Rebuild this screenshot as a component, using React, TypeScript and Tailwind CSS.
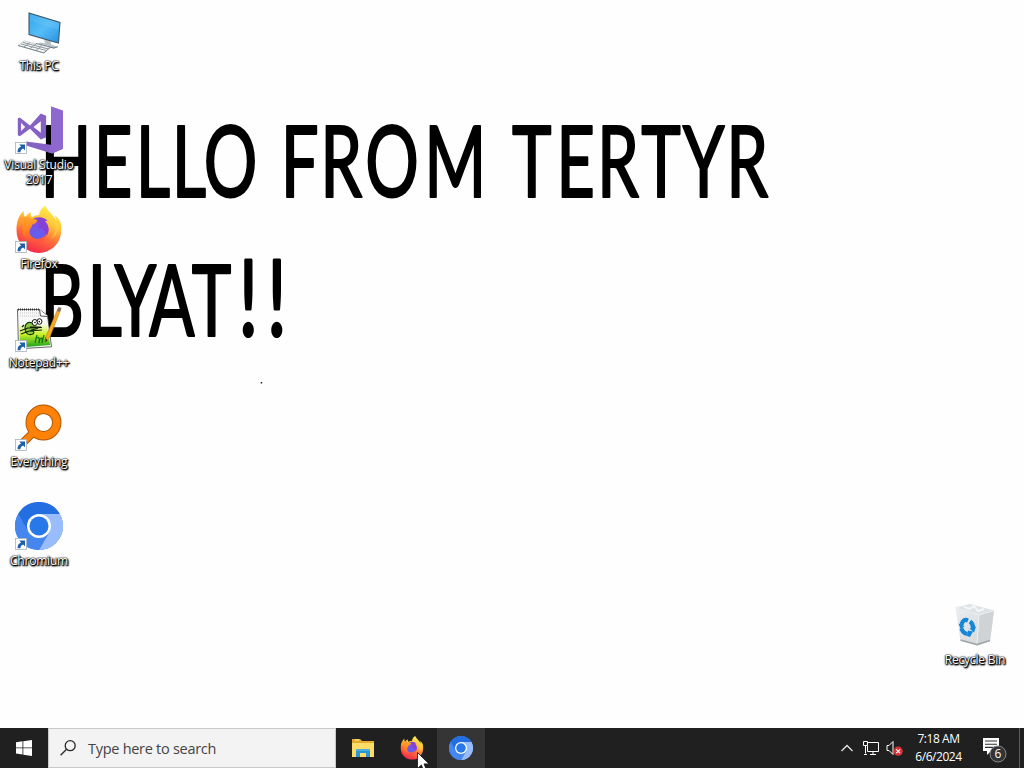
import type { ReactNode } from "react";

const ink = "#000000";

function Wallpaper() {
  return (
    <svg className="absolute inset-0 h-full w-full" viewBox="0 0 1024 728" preserveAspectRatio="none">
      <g
        fill={ink}
        stroke={ink}
        strokeWidth="2.2"
        strokeLinejoin="round"
        fontFamily="Lato, 'Open Sans', sans-serif"
        fontSize="98.5"
      >
        <g transform="scale(0.68 1)">
          <text y="197.2" x="59.5 138 199.5 252.5 299.5">HELLO</text>
          <text y="197.2" x="413 471 537 624">FROM</text>
          <text y="197.2" x="753 818 878 943 1004 1068">TERTYR</text>
          <text y="336.2" x="59.5 128.5 168.5 219.5 282">BLYAT<tspan fontSize="105" strokeWidth="3.2" x="351 393">!!</tspan></text>
        </g>
      </g>
      <rect x="260.7" y="382" width="1.5" height="1.5" fill="#222" />
    </svg>
  );
}

function Shortcut() {
  return (
    <g>
      <rect x="0.5" y="36.5" width="11" height="11" fill="#fff" stroke="#a9b2ba" strokeWidth="0.8" />
      <path d="M4.2 38.5H10v5.8l-1.9-1.9c-2 1-2.6 2-2.7 3.9H2.6c-.2-3.2 1-4.9 3.5-5.9z" fill="#1f5fa8" />
    </g>
  );
}

function PcIcon() {
  return (
    <svg className="h-12 w-12" viewBox="0 1.5 48 48">
      <defs>
        <linearGradient id="screen" x1="0" y1="0" x2="1" y2="1">
          <stop offset="0" stopColor="#30a4ec" />
          <stop offset=".5" stopColor="#56bdf8" />
          <stop offset="1" stopColor="#268fe0" />
        </linearGradient>
      </defs>
      <path d="M29 33l7 3v3l6 2-3 2-17-4 3-2 5 1z" fill="#b9c2c6" />
      <path d="M21 38l18 4.6 4-1.4" fill="none" stroke="#66757c" strokeWidth="1" />
      <path d="M14 7.5l31 9.5-1.5 20.5L14 29z" fill="url(#screen)" stroke="#3d5967" strokeWidth="1.1" />
      <path d="M15 8.8l28.8 9-.4 7L15 15z" fill="#7acbfa" opacity=".25" />
      <path d="M9 35.5l26 6.5-6 5.5L3 40z" fill="#f8f9f9" stroke="#b4bcc0" strokeWidth=".7" />
      <path d="M8 37l25 6.4M6 38.5l25 6.4M15 37l-6 4.5M21 38.5L15 43M27 40l-6 5" fill="none" stroke="#8e999f" strokeWidth="1" />
      <path d="M3 40l26 7.4 6-5.4" fill="none" stroke="#77848a" strokeWidth="1" />
    </svg>
  );
}

function VisualStudioIcon() {
  return (
    <svg className="h-12 w-12 overflow-visible" viewBox="0 0 48 48">
      <g transform="translate(0 -1.5)">
        <path
          fillRule="evenodd"
          d="M2.8 13.8l2-.9 10.2 8L25.8 9l5.3 2.2v21.5L25.8 35 15 24.2l-10.2 7.6-2-1zM6 18.3v8.3l4.2-4.1zm12.5 4.2l7.3 5.8V16.8z"
          fill="#8661c5"
        />
        <path d="M36 2l12 4.3v38L37 49l-26-8v-4l25 3.2z" fill="#8661c5" />
        <path d="M36 2l12 4.3v38L37 49l-4-1.4 3-7.4z" fill="#8f68cf" />
      </g>
      <Shortcut />
    </svg>
  );
}

function FirefoxArt() {
  return (
    <g>
      <defs>
        <linearGradient id="flame" x1=".75" y1="0" x2=".35" y2="1">
          <stop offset="0" stopColor="#fff34b" />
          <stop offset=".35" stopColor="#ffc23a" />
          <stop offset=".63" stopColor="#ff7139" />
          <stop offset="1" stopColor="#f5254c" />
        </linearGradient>
        <linearGradient id="fox" x1="0" y1="0" x2="0" y2="1">
          <stop offset="0" stopColor="#ffa52e" />
          <stop offset=".5" stopColor="#ff851d" />
          <stop offset="1" stopColor="#ff484a" />
        </linearGradient>
        <radialGradient id="globe" cx=".4" cy=".75" r=".8">
          <stop offset="0" stopColor="#5a62ee" />
          <stop offset=".5" stopColor="#7754e8" />
          <stop offset="1" stopColor="#a739cb" />
        </radialGradient>
      </defs>
      <path
        d="M45.5 16.5c-1.3-3-3.5-5.5-6-7 1 2 1.8 4.1 2 6-3-7-8.2-9-11.2-15.5-4.5 2.6-5.8 6.4-6.2 9.3-2.7.1-5 .8-7 2-1.7-1-1.5-4-1.5-4.8-2 .9-4 2.9-5.4 4.8-1.6-1.2-1.6-5-1.4-6.2C3.3 9.4 1.5 16.7 1.5 24.5a22.4 22.4 0 0 0 44.8.5c0-3 0-5.8-.8-8.5z"
        fill="url(#flame)"
      />
      <circle cx="23.5" cy="24" r="10" fill="url(#globe)" />
      <path d="M17.5 13.8c4-3.6 12-3 15.3 1.7-1-.3-2-.3-2.8 0 5 4.3 4 11.6 1.2 15-.3-5-3.8-8.5-8-8.5 1.5-2.7 1.7-5-.2-6.8z" fill="#8341d8" />
      <path
        d="M2.6 16c1.2-3.1 4-5.3 6.5-4.9 3-.8 6 .4 7.5 2 2.2 0 4.7.2 5.6.8.4 2-2 4-4.9 5-.7.4-.5 2-.5 2-2.5 2-3.1 5.6-1.6 8.4 2 3.4 6 4.7 10.5 3.1 3.1-1 5.3-3.2 6.8-4.8-1.6 7.2-8.3 11.1-15 9.6C8.5 35.2 5.8 26 8.3 18c-2-.1-4 2-5.7 5z"
        fill="url(#fox)"
      />
      <path d="M36.5 10.5c6 7 4.5 18-1.5 23 8.4-3 10.5-12.5 6.5-19z" fill="#ffdc3e" opacity=".45" />
    </g>
  );
}

function FirefoxIcon() {
  return (
    <svg className="h-12 w-12 overflow-visible" viewBox="0 0 48 48">
      <g transform="translate(0 .8)"><FirefoxArt /></g>
      <Shortcut />
    </svg>
  );
}

function NotepadIcon() {
  return (
    <svg className="h-12 w-12" viewBox="0 0 48 48">
      <defs>
        <linearGradient id="grass" x1="0" y1="0" x2="0" y2="1">
          <stop offset="0" stopColor="#f8fbe2" />
          <stop offset=".45" stopColor="#c8f028" />
          <stop offset="1" stopColor="#159d1c" />
        </linearGradient>
      </defs>
      <path d="M2.5 5.5h22l8 6 4 31.3-33 2z" fill="#f8f9f8" stroke="#424242" strokeWidth=".8" />
      <path d="M4 21l28-1 3.2 21L5 43.5z" fill="url(#grass)" />
      <path d="M3 5.5h22" stroke="#333" strokeWidth="2" strokeDasharray="1 1" />
      <path d="M5 9h19M5 12h20" stroke="#aaa" strokeDasharray="1 1" strokeWidth=".7" />
      <path d="M24.5 5.5l1 6.5 7 .5" fill="#fff" stroke="#555" />
      <path d="M17 19c-4-2-7 1-7 5 0 5 3 8 8 6 2-2 0-4-2-3 0-2 4-1 7-3" fill="#89c943" stroke="#193a0c" strokeWidth="1.2" />
      <path d="M5 27l8-3 14-.5M6 30l8-3 13-1M9 21l-2 2M15 23h11" fill="none" stroke="#151f0d" strokeWidth="1.2" />
      <ellipse cx="19.8" cy="18.5" rx="2.7" ry="3" fill="#fff" stroke="#111" />
      <ellipse cx="24.5" cy="17.5" rx="2.4" ry="2.8" fill="#fff" stroke="#111" />
      <circle cx="20" cy="18.5" r=".8" />
      <circle cx="24.3" cy="17.6" r=".8" />
      <path d="M20 39l2-8M22 34c3-2 2 2 2 5l1-4c3-3 2 1 2 4l2-8m2 2l-1 5" fill="none" stroke="#087310" strokeWidth="1.1" />
      <path d="M43 4.5l2.7 1-11 28-4 4.3.6-6.2z" fill="#f3ae21" stroke="#c87918" strokeWidth=".6" />
      <path d="M43.5 3l3 1-1.6 4-3-1z" fill="#84736a" />
      <path d="M30.8 35l-.2 3 2-2z" fill="#222" />
      <Shortcut />
    </svg>
  );
}

function EverythingIcon() {
  return (
    <svg className="h-12 w-12" viewBox="0 0 48 48">
      <path d="M18.5 29.5L5.5 42" stroke="#ad5800" strokeWidth="8" />
      <circle cx="28.5" cy="19.5" r="13.3" fill="none" stroke="#ad5800" strokeWidth="9.4" />
      <circle cx="28.5" cy="19.5" r="13.3" fill="none" stroke="#ff8208" strokeWidth="7.4" />
      <path d="M19.5 28.5L5.5 42" stroke="#ff8208" strokeWidth="6" />
      <Shortcut />
    </svg>
  );
}

function ChromiumArt() {
  return (
    <g>
      <circle cx="24" cy="24" r="24" fill="#4587ef" />
      <path d="M24 12h20.8A24 24 0 0 1 24 48l10.4-18z" fill="#98bdfa" />
      <path d="M3.2 12A24 24 0 0 1 44.8 12H24L13.6 30z" fill="#236fe2" />
      <path d="M3.2 12A24 24 0 0 0 24 48l10.4-18H13.6z" fill="#4587ef" />
      <circle cx="24" cy="24" r="12" fill="#fff" />
      <circle cx="24" cy="24" r="9.5" fill="#2878e9" />
    </g>
  );
}

function ChromiumIcon() {
  return (
    <svg className="h-12 w-12" viewBox="0 0 48 48">
      <ChromiumArt />
      <Shortcut />
    </svg>
  );
}

function RecycleIcon() {
  return (
    <svg className="h-12 w-12" viewBox="0 0 48 48">
      <defs>
        <linearGradient id="bin" x1="0" y1="0" x2="1" y2="1">
          <stop offset="0" stopColor="#eceff1" />
          <stop offset="1" stopColor="#d0d4d6" />
        </linearGradient>
      </defs>
      <path d="M4.5 6L19 3l24 6.5L39 40l-13 4.5L9.5 40z" fill="url(#bin)" />
      <path d="M28 14l15-4.5L39 40l-13 4.5z" fill="#cfd3d5" />
      <path d="M5 6l23 8 15-4.5M28 14l-2 30" fill="none" stroke="#eef1f2" />
      <path d="M7 7l12-4 22 6.5-13 3.5z" fill="#dfe2e4" />
      <path d="M13 6l6 2 4-3 4 5 6-2" stroke="#f5f6f7" fill="none" strokeWidth="2" />
      <path d="M9.5 39L26 43.5l13-4" fill="none" stroke="#a1a8ac" strokeWidth="1.8" />
      <g fill="none" stroke="#1686d7" strokeWidth="4.2">
        <path d="M10.5 24c.5-4 3-6 6.5-4.5" />
        <path d="M19 20.5c2.5 1.7 3.2 4.5 3 7" />
        <path d="M10.5 27.5c1 3.5 3 5 6 5.5" />
      </g>
      <path d="M7.5 22.5l6 2.5-3.5 4zM25 25.5l-2 6-4.5-4zM17 29.5l5 1-3 5.5-3-1z" fill="#1686d7" />
    </svg>
  );
}

function DesktopItem({ icon, lines }: { icon: ReactNode; lines: string[] }) {
  return (
    <div className="flex h-[99px] w-[78px] flex-col items-center">
      {icon}
      <div className="mt-[3px] flex flex-col items-center text-[12px] leading-[15px] tracking-[-0.2px] text-white [text-shadow:0_0_1px_#000,1px_1px_1px_#000,0_1px_2px_#000,1px_1px_2px_#000,0_0_2px_#000]">
        {lines.map((line) => (
          <span key={line} className="whitespace-nowrap">{line}</span>
        ))}
      </div>
    </div>
  );
}

function Taskbar() {
  return (
    <footer className="flex h-10 shrink-0 bg-[#202020] text-white">
      <button className="flex h-10 w-12 items-center justify-center" aria-label="Start">
        <svg className="h-4 w-4" viewBox="0 0 16 16">
          <path d="M0 2.2l6.5-.9v6.2H0zM7.3 1.2L16 0v7.5H7.3zM0 8.3h6.5v6.2L0 13.6zM7.3 8.3H16V16l-8.7-1.3z" fill="#fff" />
        </svg>
      </button>
      <div className="flex h-10 w-72 items-center border border-[#c8c8c8] bg-[#f3f3f3] pl-[11px] text-[#444]">
        <svg className="h-4 w-4" viewBox="0 0 16 16" fill="none" stroke="#292929" strokeWidth="1.3">
          <circle cx="10.2" cy="5.7" r="5" />
          <path d="M6.6 9.2L.6 15.3" />
        </svg>
        <span className="ml-3 whitespace-nowrap pt-[2px] text-[14.5px] leading-5 tracking-[-0.28px]">Type here to search</span>
      </div>
      <div className="flex items-center pl-[3px]">
        <div className="flex h-10 w-12 items-center justify-center">
          <svg className="h-6 w-6" viewBox="0 0 24 24">
            <path d="M1 3h8l2 2h12v16H1z" fill="#e6ad2d" />
            <path d="M1 7h22v14H1z" fill="#ffdb68" />
            <path d="M4 4h4" stroke="#fff3b5" />
            <path d="M5 21v-7q0-1 1-1h12q1 0 1 1v7h-4v-4H9v4z" fill="#2b98d3" />
            <path d="M5 14h14" stroke="#68c6ee" />
          </svg>
        </div>
        <div className="flex h-10 w-[50px] items-center justify-center">
          <svg className="h-6 w-6" viewBox="0 0 48 48"><FirefoxArt /></svg>
        </div>
        <div className="flex h-10 w-12 items-center justify-center bg-[#353535]">
          <svg className="h-6 w-6" viewBox="0 0 48 48"><ChromiumArt /></svg>
        </div>
      </div>
      <div className="ml-auto flex items-center">
        <svg className="h-4 w-4" viewBox="0 0 16 16" fill="none" stroke="#e5e5e5" strokeWidth="1.3">
          <path d="M2.5 11L8 5.5l5.5 5.5" />
        </svg>
        <svg className="ml-2 h-4 w-4" viewBox="0 0 16 16" fill="none" stroke="#fff" strokeWidth="1">
          <path d="M5 2.5h10.5v9H4.5V6M7 14.5h6M10 11.5v3" />
          <path d="M.5 1.5h4v4h-4zM2.5 5.5v8M1 14.5h3" />
        </svg>
        <svg className="ml-[6px] h-4 w-[18px]" viewBox="0 0 18 16" fill="none">
          <path d="M2 5.5h2l4-4v13l-4-4H2z" stroke="#fff" strokeWidth="1" />
          <circle cx="13.2" cy="11.2" r="4.6" fill="#dc3037" />
          <path d="M11.3 9.3l3.8 3.8m0-3.8l-3.8 3.8" stroke="#fff" strokeWidth="1.2" />
        </svg>
        <div className="flex h-10 w-[71px] flex-col items-center justify-center text-[12px] leading-[18px] tracking-[-0.45px]">
          <span>7:18 AM</span>
          <span>6/6/2024</span>
        </div>
        <div className="ml-[7px] flex h-10 w-[38px] items-center pt-[2px]">
          <svg className="h-7 w-7" viewBox="0 0 28 28">
            <path d="M2 3h16v13h-8l-4 4v-4H2z" fill="#fff" />
            <path d="M4 6h12M4 9.2h12M4 12.4h12" stroke="#303030" strokeWidth="1.1" />
            <circle cx="17" cy="19" r="8" fill="#343434" stroke="#85898b" strokeWidth="1" />
            <text x="17" y="23.2" textAnchor="middle" fill="#fff" fontFamily="'Open Sans', sans-serif" fontSize="12">6</text>
          </svg>
        </div>
        <div className="h-10 w-[5px] border-l border-[#5b5b5b]" />
      </div>
    </footer>
  );
}

export default function App() {
  return (
    <main className="relative flex h-[768px] w-[1024px] flex-col overflow-hidden bg-white [font-family:'Open_Sans','Noto_Sans',sans-serif]">
      <section className="relative flex-1 bg-[#fefefe]">
        <Wallpaper />
        <div className="absolute left-0 top-[7px] flex flex-col">
          <DesktopItem icon={<PcIcon />} lines={["This PC"]} />
          <DesktopItem icon={<VisualStudioIcon />} lines={["Visual Studio", "2017"]} />
          <DesktopItem icon={<FirefoxIcon />} lines={["Firefox"]} />
          <DesktopItem icon={<NotepadIcon />} lines={["Notepad++"]} />
          <DesktopItem icon={<EverythingIcon />} lines={["Everything"]} />
          <DesktopItem icon={<ChromiumIcon />} lines={["Chromium"]} />
        </div>
        <div className="absolute left-[936px] top-[601px]">
          <DesktopItem icon={<RecycleIcon />} lines={["Recycle Bin"]} />
        </div>
      </section>
      <Taskbar />
      <svg className="absolute left-[417px] top-[752px] h-5 w-3" viewBox="0 0 12 20">
        <path d="M.5.5v16l3.8-3.6 2.5 5.8 2.6-1.1L7 11.9h5z" fill="#fff" stroke="#161616" strokeWidth=".8" />
      </svg>
    </main>
  );
}
